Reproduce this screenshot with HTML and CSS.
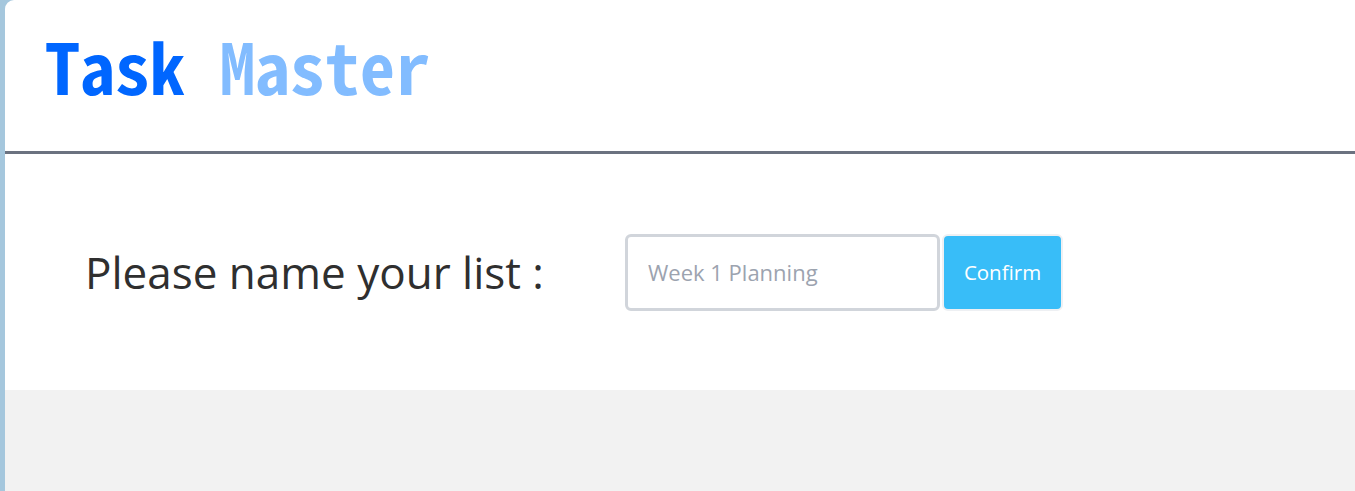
FILE: index.html
```html
<!DOCTYPE html>
<html lang="en">
<head>
<meta charset="utf-8">
<title>Task Master</title>
<link rel="stylesheet" href="styles.css">
</head>
<body>
<div class="app">
  <header class="header">
    <h1 class="logo"><span class="logo-task">Task</span> <span class="logo-master">Master</span></h1>
  </header>
  <section class="naming">
    <label class="naming-label" for="list-name">Please name your list :</label>
    <div class="naming-form">
      <input class="naming-input" id="list-name" type="text" placeholder="Week 1 Planning">
      <button class="naming-button" type="button">Confirm</button>
    </div>
  </section>
  <div class="content"></div>
</div>
</body>
</html>
```

FILE: styles.css
```css
html, body {
  margin: 0;
  padding: 0;
  height: 100%;
}

body {
  background: #a5c7dd;
  font-family: "Open Sans", "Noto Sans", sans-serif;
}

.app {
  margin-left: 5px;
  min-height: 100%;
  background: #ffffff;
  border-top-left-radius: 9px;
  display: flex;
  flex-direction: column;
  overflow: hidden;
}

.header {
  height: 129px;
  padding-bottom: 22px;
  border-bottom: 3px solid #6b7280;
  box-sizing: content-box;
  padding-left: 40px;
  display: flex;
  align-items: center;
}

.logo {
  margin: 0;
  font-family: "Noto Sans Mono CJK SC", "DejaVu Sans Mono", monospace;
  font-weight: 700;
  font-size: 70px;
  line-height: 1;
  letter-spacing: 0;
}

.logo-task {
  color: #0066ff;
}

.logo-master {
  color: #82bcff;
}

.naming {
  height: 236px;
  display: flex;
  align-items: center;
  padding-left: 80px;
}

.naming-label {
  font-size: 44px;
  color: #2f2f2f;
  width: 540px;
}

.naming-form {
  display: flex;
  align-items: center;
  gap: 2px;
}

.naming-input {
  box-sizing: border-box;
  width: 315px;
  height: 77px;
  border: 3px solid #d1d5db;
  border-radius: 6px;
  padding: 0 0 0 20px;
  font-family: inherit;
  font-size: 22px;
  color: #374151;
  outline: none;
}

.naming-input::placeholder {
  color: #9ca3af;
}

.naming-button {
  box-sizing: border-box;
  width: 121px;
  height: 77px;
  border: 2px solid #eef0f3;
  border-radius: 6px;
  background: #38bdf8;
  color: #ffffff;
  font-family: inherit;
  font-size: 20.5px;
  padding: 0;
}

.content {
  flex: 1;
  background: #f2f2f2;
}
```
